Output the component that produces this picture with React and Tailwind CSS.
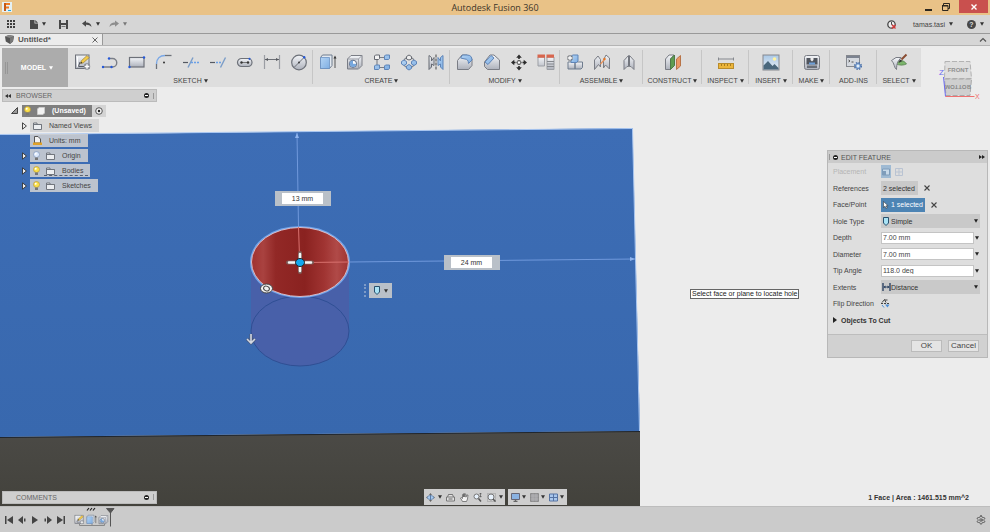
import React from "react";
import { LuSettings } from "react-icons/lu";

const Caret = ({ className = "text-[#333]" }) => (
  <svg viewBox="0 0 4 4" className={`h-1 w-1 shrink-0 ${className}`} aria-hidden="true">
    <path d="M0 .3h4L2 3.800z" fill="currentColor" />
  </svg>
);

// shared gradients for all the tool icons
const IconDefs = () => (
  <svg className="absolute h-0 w-0" aria-hidden="true">
    <defs>
      <linearGradient id="metal" x1="0" y1="0" x2="0" y2="1">
        <stop offset="0" stopColor="#f4f6f9" />
        <stop offset="1" stopColor="#adb1bb" />
      </linearGradient>
      <linearGradient id="sky" x1="0" y1="0" x2="1" y2="1">
        <stop offset="0" stopColor="#b4d4f4" />
        <stop offset="1" stopColor="#7faee2" />
      </linearGradient>
      <linearGradient id="picture" x1="0" y1="0" x2="0" y2="1">
        <stop offset="0" stopColor="#a9c8e6" />
        <stop offset="1" stopColor="#e8eef4" />
      </linearGradient>
    </defs>
  </svg>
);

const glyphs = {
  sketch: (
    <>
      <rect x="1.500" y="2" width="13.500" height="13.500" fill="url(#metal)" stroke="#6d7179" />
      <path d="M3.500 4v9.500h8" fill="none" stroke="#fff" />
      <path d="M4.500 13.500L6 9M4.500 13.500h6" stroke="#555962" />
      <path d="M6.500 10.500l.8-2.700L13 2.500l2.200 2.200-6 5.200z" fill="#f4cb4a" stroke="#8a7030" strokeWidth=".6" />
      <path d="M6.500 10.500l.6-1.800 1.200 1.200z" fill="#222" />
      <circle cx="13" cy="13.500" r="3.200" fill="#8a8d94" />
      <path d="M13 11.200v4.600M10.700 13.500h4.600" stroke="#fff" strokeWidth="1.400" />
    </>
  ),
  line: (
    <>
      <path d="M2 14h9.500a4.200 4.200 0 0 0 0-8.500H8" fill="none" stroke="#7b7f87" strokeWidth="1.400" />
      <circle cx="2" cy="14" r="1.200" fill="#2458d8" />
      <circle cx="10.500" cy="14" r="1.200" fill="#2458d8" />
      <circle cx="8" cy="5.500" r="1.200" fill="#2458d8" />
    </>
  ),
  rect: (
    <>
      <rect x="1.500" y="4.500" width="14.500" height="9.500" fill="url(#metal)" stroke="#6d7179" strokeWidth="1.200" />
      <circle cx="16" cy="4.500" r="1.200" fill="#2458d8" />
      <circle cx="1.500" cy="14" r="1.200" fill="#2458d8" />
    </>
  ),
  fillet: (
    <>
      <path d="M1.500 16V11" stroke="#6d7179" strokeWidth="1.300" />
      <path d="M1.500 11C1.500 5.500 5 2.500 10 2.500" fill="none" stroke="#7aa8e6" strokeWidth="1.500" />
      <path d="M10 2.500h6.500" stroke="#6d7179" strokeWidth="1.300" />
      <circle cx="9" cy="9.500" r="1" fill="#333" />
    </>
  ),
  trim: (
    <>
      <path d="M11 4.500L6 14.500" stroke="#7a9cc8" strokeWidth="1.400" />
      <path d="M1 9.500h5" stroke="#555962" strokeWidth="1.200" />
      <path d="M9 9.500h8" stroke="#6aa0e8" strokeWidth="1.300" strokeDasharray="2 1" />
    </>
  ),
  extend: (
    <>
      <path d="M1 9.500h5" stroke="#555962" strokeWidth="1.200" />
      <path d="M7 9.500h6" stroke="#6aa0e8" strokeWidth="1.300" strokeDasharray="2 1" />
      <path d="M16.500 4.500l-5 10" stroke="#7a9cc8" strokeWidth="1.400" />
    </>
  ),
  slot: (
    <>
      <rect x="1.500" y="5.500" width="14.500" height="8" rx="4" fill="url(#metal)" stroke="#6d7179" strokeWidth="1.200" />
      <path d="M6 9.500h6" stroke="#777" />
      <circle cx="5.500" cy="9.500" r="1.200" fill="#333" />
      <circle cx="12" cy="9.500" r="1.200" fill="#333" />
      <circle cx="13.500" cy="5.800" r="1.100" fill="#2458d8" />
    </>
  ),
  dimension: (
    <>
      <path d="M1.500 2v14M16.500 2v14" stroke="#9a9da3" strokeWidth="1.200" />
      <path d="M2 6.500h14" stroke="#6d7076" />
      <path d="M2 6.500L5 5v3zM16 6.500L13 5v3z" fill="#55585e" />
    </>
  ),
  circle: (
    <>
      <circle cx="9" cy="9.500" r="7.300" fill="url(#metal)" stroke="#6d7179" strokeWidth="1.200" />
      <path d="M4 14.500l10-10" stroke="#6d7179" />
      <circle cx="9" cy="9.500" r=".9" fill="#333" />
      <circle cx="14.200" cy="4.300" r="1.200" fill="#2458d8" />
    </>
  ),
  extrude: (
    <>
      <path d="M1.500 4.500l2-2.500h9.500v10.500l-2.500 3h-9z" fill="#e3e9f0" stroke="#6f7c8e" />
      <path d="M1.500 4.500h9v11h-9z" fill="url(#sky)" stroke="#6c93c4" strokeWidth=".8" />
      <path d="M16 15V5" stroke="#555" />
      <path d="M16 2.500l1.500 3h-3z" fill="#333" />
    </>
  ),
  hole: (
    <>
      <path d="M1.500 6l3.500-3.500h11v10L12.500 16h-11z" fill="url(#metal)" stroke="#7a7d85" />
      <path d="M1.500 6h11v10M12.500 6L16 2.500" fill="none" stroke="#9c9fa7" />
      <circle cx="7" cy="10.800" r="3.600" fill="#fff" stroke="#5a6780" />
      <path d="M7 7.500v3.300h3.300A3.300 3.300 0 1 1 7 7.500" fill="#77a7dd" />
    </>
  ),
  rectPattern: (
    <>
      <path d="M4 4.500h10M4 4.500v10h10" fill="none" stroke="#7b7f87" strokeWidth="1.100" />
      <path d="M1.500 3l1-1H6.500v3.500l-1 1h-4z" fill="#f3f3f3" stroke="#666a72" />
      <path d="M11.500 3l1-1h4v3.500l-1 1h-4zM1.500 13l1-1h4v3.500l-1 1h-4zM11.500 13l1-1h4v3.500l-1 1h-4z" fill="url(#sky)" stroke="#5f85b8" />
    </>
  ),
  circPattern: (
    <>
      <circle cx="9" cy="9.500" r="5.500" fill="none" stroke="#7b7f87" strokeWidth="1.100" />
      <path d="M6.500 3.500L9 2l2.500 1.500v2.500L9 7 6.500 6z" fill="#eee" stroke="#666a72" />
      <path d="M1.500 8.500L4 7l2.500 1.500V11L4 12.500 1.500 11zM11.500 8.500L14 7l2.500 1.500V11L14 12.500 11.500 11zM6.500 13L9 11.500l2.500 1.500v2.500L9 17l-2.500-1.500z" fill="url(#sky)" stroke="#5f85b8" />
    </>
  ),
  mirror: (
    <>
      <path d="M2 2.500l2.500 2V8L7 4.500v8L4.500 11v3L2 16.500z" fill="url(#metal)" stroke="#666a72" />
      <path d="M16 2.500l-2.500 2V8L11 4.500v8l2.500-1.500v3l2.500 2.500z" fill="url(#sky)" stroke="#5f85b8" />
      <path d="M9 1.500v15.500" stroke="#444" strokeDasharray="3 1" />
    </>
  ),
  roundEdge: (
    <>
      <path d="M1.500 7.500L6 2h5l5 4v6.500l-3.500 4h-11z" fill="url(#metal)" stroke="#7a7d85" />
      <path d="M6.500 2H11c3.500 0 5 2 5 5l-3.500 3.500C12.500 7.500 11 6 9 6L4.500 5z" fill="url(#sky)" stroke="#5f85b8" />
    </>
  ),
  chamferEdge: (
    <>
      <path d="M1.500 9L7 2h4l5.500 5v9.500h-12l-3-3z" fill="url(#metal)" stroke="#7a7d85" />
      <path d="M2 9L8 2.500l3 2.500-6 6.500z" fill="url(#sky)" stroke="#5f85b8" />
    </>
  ),
  move: (
    <>
      <path d="M9 1.500l2.800 3.300H6.200zM9 17.500l2.800-3.300H6.200zM1 9.500l3.300-2.800v5.600zM17 9.500l-3.300-2.800v5.600z" fill="#2b2b2b" />
      <path d="M9 4v11M3.500 9.500h11" stroke="#2b2b2b" strokeWidth="1.600" strokeDasharray="2 1" />
      <rect x="7.500" y="8" width="3" height="3" fill="#fff" stroke="#777" />
    </>
  ),
  params: (
    <>
      <path d="M1 4h6.500v9H1zM10 4h7v12.500h-7z" fill="url(#metal)" stroke="#9c9fa5" />
      <path d="M.5 1.500h7.500v3.200H.5zM9.500 1.500h7.500v3.200H9.500z" fill="#d8664e" />
      <path d="M10 8.500h7M10 11h7M10 13.500h7" stroke="#85888e" />
    </>
  ),
  component: (
    <>
      <path d="M2 9h7v7H2zM9 10.500l1.500-1.500h6v5.500L15 16H9z" fill="url(#metal)" stroke="#6f7c8e" />
      <path d="M5 4l1.500-2H12v6l-1.500 1.500H5z" fill="url(#sky)" stroke="#5f85b8" />
      <path d="M4 2v6M1 5h6" stroke="#6d7076" strokeWidth="2.800" />
      <path d="M4 2.500v5M1.500 5h5" stroke="#fff" strokeWidth="1.300" />
    </>
  ),
  joint: (
    <>
      <path d="M1.500 7L5 3l2.500 3.500V14l-2-2.500-4 5zM16.500 5L13 2l-2.500 5v8l2-3 4 4z" fill="url(#metal)" stroke="#7a7d85" />
      <path d="M7.500 11l4-4.500" stroke="#e8915a" strokeWidth="1.200" />
      <circle cx="11.500" cy="6" r="1.200" fill="#e87722" />
    </>
  ),
  builtJoint: (
    <>
      <path d="M8.500 2.500L4 7.500v9l3-3h1.500zM9.500 2.500l4.500 5v9l-3-3H9.500z" fill="url(#metal)" stroke="#7a7d85" />
      <path d="M9 3v10.500" stroke="#6d7076" />
    </>
  ),
  plane: (
    <>
      <path d="M1.500 6L5 2h5L6.500 6v10.500h-5z" fill="url(#metal)" stroke="#7a7d85" />
      <path d="M6.500 6L10.500 2v10.500l-4 4z" fill="#5e9c50" stroke="#4d7a48" />
      <path d="M12.500 6L16.500 2.500v10.500l-4 3.500z" fill="#ea9766" stroke="#b87448" />
    </>
  ),
  measure: (
    <>
      <path d="M1.500 6h15M1.500 4.500v3M16.500 4.500v3" stroke="#85888e" />
      <rect x="1.500" y="10.500" width="15" height="5" fill="#ecb53a" stroke="#b88c2c" />
      <path d="M4.500 11v2M7.500 11v2M10.500 11v2M13.500 11v2" stroke="#8a6414" strokeWidth=".7" />
    </>
  ),
  image: (
    <>
      <rect x="1" y="2" width="16" height="15" fill="url(#picture)" stroke="#85888e" />
      <circle cx="12.500" cy="6" r="1.800" fill="#fff3a0" />
      <path d="M1.500 16.500v-4L6 8l4.500 5 2-2 4 4v1.500z" fill="#4a677c" />
    </>
  ),
  printer: (
    <>
      <rect x="1.500" y="2.500" width="15" height="14" rx="2" fill="url(#metal)" stroke="#7a7d85" />
      <path d="M3.500 5h11v6.500h-11z" fill="#50555e" />
      <path d="M7.500 5h3v2L9 8.500 7.500 7z" fill="#ececec" />
      <path d="M4 12.500h10V15H4z" fill="#6a6f78" />
      <path d="M6 9.500h6v2H6z" fill="#6d9fd8" />
    </>
  ),
  addins: (
    <>
      <rect x="1.500" y="2.500" width="13" height="11" fill="#d5d9df" stroke="#85888e" />
      <path d="M1.500 3h13v2h-13z" fill="#7c8390" />
      <path d="M3.500 7l1.500 1-1.500 1M6.500 9h2" fill="none" stroke="#555" />
      <circle cx="13" cy="13" r="3.300" fill="none" stroke="#4a70a8" strokeWidth="1.500" strokeDasharray="1.500 1.100" />
      <circle cx="13" cy="13" r="2.500" fill="#a9c8ea" stroke="#5a80b8" />
      <circle cx="13" cy="13" r=".9" fill="#fff" />
    </>
  ),
  select: (
    <>
      <path d="M6 11c3-5 8-4 10.500 0-3 1.500-7 1.500-10.500 0" fill="#7cb46c" stroke="#4f7c47" strokeWidth=".7" />
      <path d="M1.500 7.500L6 4.500h5L8 8.500c-1 2-1.500 5-1.500 8C4 15 4.500 10 1.500 7.500z" fill="url(#metal)" stroke="#7a7d85" />
      <path d="M11.500 6.500l5-5" stroke="#8a4c32" strokeWidth="2" />
      <path d="M8.500 10l1.500-3.500 2.500 1.500z" fill="#333" />
    </>
  ),
};

const ToolIcon = ({ name, size = "h-[18px] w-[18px]" }) => (
  <svg viewBox="0 0 18 18" className={size} aria-hidden="true">
    {glyphs[name]}
  </svg>
);

const groups = [
  { label: "SKETCH", tools: ["sketch", "line", "rect", "fillet", "trim", "extend", "slot", "dimension", "circle"], width: "w-[245px]" },
  { label: "CREATE", tools: ["extrude", "hole", "rectPattern", "circPattern", "mirror"], width: "w-[137px]" },
  { label: "MODIFY", tools: ["roundEdge", "chamferEdge", "move", "params"], width: "w-[110px]" },
  { label: "ASSEMBLE", tools: ["component", "joint", "builtJoint"], width: "w-[83px]" },
  { label: "CONSTRUCT", tools: ["plane"], width: "w-[59px]" },
  { label: "INSPECT", tools: ["measure"], width: "w-[47px]" },
  { label: "INSERT", tools: ["image"], width: "w-[44px]" },
  { label: "MAKE", tools: ["printer"], width: "w-[37px]" },
  { label: "ADD-INS", tools: ["addins"], width: "w-[47px]", plain: true },
  { label: "SELECT", tools: ["select"], width: "w-[44px]", last: true },
];

const TitleBar = () => (
  <div className="flex h-[15px] shrink-0 items-start bg-[#e9c287]">
    <div className="flex flex-1 pl-[2px] pt-[2px]">
      <svg viewBox="0 0 10 10" className="h-[10px] w-[10px]" aria-hidden="true">
        <path d="M0 0h10v10H0z" fill="#e4f1f5" />
        <path d="M2 1h6v2H4v1.500h3v2H4V9H2z" fill="#ee7b22" />
        <path d="M2 1h2v8H2z" fill="#c65a14" />
        <path d="M6 8h3v1H6z" fill="#25a7dd" />
      </svg>
    </div>
    <h1 className="font-['Open_Sans',sans-serif] text-[9px] leading-[15px] text-[#3c352a]">Autodesk Fusion 360</h1>
    <div className="flex flex-1 justify-end gap-[9px] pr-[2px]">
      <button aria-label="Minimize" className="flex h-[13px] items-center">
        <svg viewBox="0 0 8 8" className="h-2 w-2"><path d="M0 6h7v2H0z" fill="#2d281f" /></svg>
      </button>
      <button aria-label="Restore" className="flex h-[13px] items-center">
        <svg viewBox="0 0 8 8" className="h-2 w-2">
          <path d="M1.500 2V.5h6v5H6M.5 2.500h5.500v5H.5z" fill="none" stroke="#2d281f" />
          <path d="M0 2h6v1.500H0z" fill="#2d281f" />
        </svg>
      </button>
      <button aria-label="Close" className="flex h-[13px] w-[29px] items-center justify-center bg-[#c9504e]">
        <svg viewBox="0 0 6 6" className="h-[6px] w-[6px]"><path d="M.5.5l5 5M5.500.5l-5 5" stroke="#fff" strokeWidth="1.400" /></svg>
      </button>
    </div>
  </div>
);

const MenuBar = () => (
  <div className="flex h-[19px] shrink-0 items-center justify-between border-b border-[#999] bg-[#d6d6d6] px-[6px]">
    <div className="flex items-center text-[#444]">
      <button aria-label="Data panel" className="mr-[14px]">
        <svg viewBox="0 0 10 10" className="h-[10px] w-[10px]">
          <path d="M1 1h2v2H1zM4 1h2v2H4zM7 1h2v2H7zM1 4h2v2H1zM4 4h2v2H4zM7 4h2v2H7zM1 7h2v2H1zM4 7h2v2H4zM7 7h2v2H7z" fill="#3d3d3d" />
        </svg>
      </button>
      <button aria-label="File" className="mr-[13px] flex items-center gap-1">
        <svg viewBox="0 0 8 9" className="h-[9px] w-2"><path d="M0 0h4.500v3.500H8V9H0zM5.300 0L8 2.700H5.300z" fill="#484848" /></svg>
        <Caret />
      </button>
      <button aria-label="Save" className="mr-[14px]">
        <svg viewBox="0 0 9 9" className="h-[9px] w-[9px]">
          <path d="M0 0h9v9H0z" fill="#484848" />
          <path d="M2 0h5v3H2zM2 5h5v4H2z" fill="#d6d6d6" />
          <path d="M2.500 6h4v1h-4z" fill="#777" />
        </svg>
      </button>
      <button aria-label="Undo" className="mr-[9px] flex items-center gap-1">
        <svg viewBox="0 0 10 8" className="h-2 w-[10px]"><path d="M0 3.500L4 .5v2c3 0 5 1 5.500 4.500C8 5.200 6.500 4.600 4 4.700v2z" fill="#484848" /></svg>
        <Caret />
      </button>
      <button aria-label="Redo" className="flex items-center gap-1">
        <svg viewBox="0 0 10 8" className="h-2 w-[10px]"><path d="M10 3.500L6 .5v2C3 2.500 1 3.500.5 7 2 5.200 3.500 4.600 6 4.700v2z" fill="#8d8d8d" /></svg>
        <Caret className="text-[#777]" />
      </button>
    </div>
    <div className="flex items-center text-[7px] text-[#444]">
      <button aria-label="Job status" className="mr-[17px]">
        <svg viewBox="0 0 9 9" className="h-[9px] w-[9px]">
          <circle cx="4.500" cy="4.500" r="3.700" fill="#eee" stroke="#484848" strokeWidth="1.300" />
          <path d="M4.500 2v2.500l2 1" fill="none" stroke="#484848" />
          <path d="M5 5l3.500 3.500M8.500 5L5 8.500" stroke="#d83a3a" strokeWidth="1.300" />
        </svg>
      </button>
      <button className="mr-[14px] flex items-center gap-1">tamas.tasi<Caret /></button>
      <button aria-label="Help" className="flex items-center gap-[4px]">
        <span className="flex h-[9px] w-[9px] items-center justify-center rounded-full bg-[#484848] text-[7px] leading-none font-bold text-[#ddd]">?</span>
        <Caret />
      </button>
    </div>
  </div>
);

const TabBar = () => (
  <div className="flex h-[12px] shrink-0 items-center justify-between border-b border-[#b4b4b4] bg-[#d6d6d6] pr-[3px]">
    <div className="flex h-full w-[103px] items-center border-r border-[#999] bg-[#ececec] pr-[4px] pl-[5px]">
      <svg viewBox="0 0 9 9" className="h-[9px] w-[9px]" aria-hidden="true">
        <path d="M0 1.500L4 0l5 1-1 5.500L5 9 .8 6.500z" fill="#555" />
        <path d="M0 1.500L4 0l5 1-4 2z" fill="#888" />
        <path d="M5 3l4-2-1 5.500L5 9z" fill="#777" />
      </svg>
      <span className="ml-[4px] flex-1 text-[8px] font-bold text-[#555]">Untitled*</span>
      <button aria-label="Close tab">
        <svg viewBox="0 0 6 6" className="h-[6px] w-[6px]"><path d="M.5.5l5 5M5.500.5l-5 5" stroke="#666" /></svg>
      </button>
    </div>
    <button aria-label="Collapse toolbar">
      <svg viewBox="0 0 8 6" className="h-[6px] w-2"><path d="M1 4.500l3-3 3 3" fill="none" stroke="#555" strokeWidth="1.200" /></svg>
    </button>
  </div>
);

const Toolbar = () => (
  <div className="relative mt-[2px] ml-[2px] flex h-[39px] w-fit bg-[#dedede]">
    <button className="relative flex w-[66px] items-center justify-center gap-[3px] bg-[#acacac] pl-[4px] text-[7px] font-bold text-white">
      <span className="absolute top-[14px] left-[3px] h-3 w-[3px] border-x border-[#969696]" />
      MODEL <Caret className="text-white" />
    </button>
    {groups.map((g) => (
      <div key={g.label} className={`${g.width} relative flex flex-col items-center`}>
        <div className="mt-[5px] flex">
          {g.tools.map((t) => (
            <button key={t} aria-label={t} className="flex w-[27px] justify-center">
              <ToolIcon name={t} />
            </button>
          ))}
        </div>
        <button className="mt-[5px] flex items-center gap-[2px] text-[7px] leading-[10px] text-[#444]">
          {g.label}
          {!g.plain && <Caret />}
        </button>
        {!g.last && <span className="absolute top-[2px] right-0 h-[34px] w-px bg-[#c6c6c6]" />}
      </div>
    ))}
  </div>
);

const ViewCube = () => (
  <svg viewBox="0 0 44 44" className="absolute top-[12px] right-[8px] h-11 w-11" aria-label="View cube">
    <path d="M7 3.500h25l1.500 17L32 37H9L6.500 20.500z" fill="#d7d7d7" />
    <path d="M7 3.500h25l1.500 17h-27z" fill="#dedede" stroke="#b3b3b3" strokeDasharray="5 2" />
    <path d="M6.500 21h27L32 37.500H8z" fill="#cfcfcf" stroke="#aaa" strokeDasharray="5 2" />
    <text x="20" y="14" textAnchor="middle" fontSize="6" fontWeight="bold" fill="#909090">FRONT</text>
    <text x="20" y="-27" textAnchor="middle" fontSize="6" fontWeight="bold" fill="#8a8a8a" transform="rotate(180 20 0)">BOTTOM</text>
    <path d="M7.500 38.500L5.500 19" stroke="#6a6af0" />
    <path d="M7.500 38.500h29" stroke="#f07070" />
    <text x="1" y="17" fontSize="8" fill="#6a6af0">Z</text>
    <text x="37" y="41" fontSize="7" fill="#f07070">X</text>
  </svg>
);

const Scene = () => (
  <svg viewBox="0 0 990 460" preserveAspectRatio="xMinYMin slice" className="absolute inset-0 h-full w-full" aria-label="Model view">
    <defs>
      <linearGradient id="bore" x1="0" x2="1" y1="0" y2="0">
        <stop offset="0" stopColor="#a03230" />
        <stop offset=".12" stopColor="#a94240" />
        <stop offset=".25" stopColor="#922826" />
        <stop offset=".55" stopColor="#8a2220" />
        <stop offset=".75" stopColor="#a03432" />
        <stop offset=".88" stopColor="#b04a48" />
        <stop offset="1" stopColor="#a03432" />
      </linearGradient>
      <linearGradient id="side" x1="0" x2="0" y1="0" y2="1">
        <stop offset="0" stopColor="#4b4a46" />
        <stop offset="1" stopColor="#43423c" />
      </linearGradient>
      <linearGradient id="face" x1="0" x2="0" y1="0" y2="1">
        <stop offset="0" stopColor="#3d6db5" />
        <stop offset="1" stopColor="#3868ae" />
      </linearGradient>
    </defs>
    <path d="M0 391l640-6v75H0z" fill="url(#side)" />
    <path d="M0 89l632.500-7L640 385 0 391z" fill="url(#face)" />
    <path d="M0 88.500l632.500-6L639.500 385" fill="none" stroke="#a9c6f0" strokeWidth="1" />
    <path d="M0 391.500l640-6" stroke="#20262e" />
    <path d="M251 216v69a49 35 0 0 0 98 0v-69z" fill="#4860a9" />
    <ellipse cx="300" cy="285" rx="49" ry="35" fill="#4860a9" stroke="#2f4f94" />
    <ellipse cx="300" cy="216" rx="49" ry="35" fill="none" stroke="#6fa5ec" strokeWidth="2" />
    <ellipse cx="300" cy="216" rx="48.500" ry="34.500" fill="url(#bore)" stroke="#e3c3cc" strokeWidth=".9" />
    <path d="M297 87l1.500 94M349 216l286-3" stroke="#7099dc" fill="none" />
    <path d="M298.500 181l1 30M305 216.500l44-.5" stroke="#d9716e" fill="none" />
    <path d="M297 87l-2 5h4zM635 213l-5-2v4z" fill="#8fb4ee" />
    <path d="M300 207v19M288 216.500h24" stroke="#7c5c58" strokeWidth="4" strokeLinecap="round" />
    <path d="M300 208v17M289 216.500h22" stroke="#f5f5f5" strokeWidth="2.500" strokeLinecap="round" />
    <ellipse cx="300" cy="216.500" rx="4.500" ry="4" fill="#12a7ef" stroke="#222" />
    <ellipse cx="266.500" cy="242.500" rx="6" ry="4.500" fill="#f0f0f0" stroke="#444" />
    <ellipse cx="266.500" cy="242.500" rx="3" ry="2.300" fill="none" stroke="#444" transform="rotate(25 266.500 242.500)" />
    <path d="M251 288v8M247 293l4 4 4-4" fill="none" stroke="#4a5878" strokeWidth="3" />
    <path d="M251 288v8M247 293l4 4 4-4" fill="none" stroke="#d3d8e2" strokeWidth="1.600" />
  </svg>
);

const DimensionBox = ({ label, value, place }) => (
  <label className={`absolute ${place} flex h-[15px] w-14 bg-[#b9c0c8] py-[2px] pr-[8px] pl-[7px]`}>
    <input aria-label={label} defaultValue={value} className="w-full bg-white text-center text-[7px] leading-none text-[#333] outline-none" />
  </label>
);

const BoltGlyph = () => (
  <svg viewBox="0 0 6 9" className="h-[9px] w-[6px] shrink-0" aria-hidden="true">
    <path d="M.5.5h5V6L3 8.500.5 6z" fill="#a9e3f5" stroke="#27506e" />
  </svg>
);

const Bulb = ({ off }) => (
  <svg viewBox="0 0 7 10" className="h-[10px] w-[7px]" aria-hidden="true">
    <circle cx="3.500" cy="3.500" r="3" fill={off ? "#dbe8fb" : "#fbe04a"} stroke={off ? "#8095b8" : "#b8983c"} strokeWidth=".7" />
    <path d="M2 6.500h3V9H2z" fill="#777" />
    <circle cx="2.700" cy="2.700" r="1" fill="#fff" />
  </svg>
);

const Folder = () => (
  <svg viewBox="0 0 9 8" className="h-2 w-[9px]" aria-hidden="true">
    <path d="M.5 1h3.500v1.500h4.500v5h-8z" fill="#eceef1" stroke="#70757d" />
    <path d="M.5 2.500h8" stroke="#70757d" />
  </svg>
);

const PanelHeader = ({ title }) => (
  <div className="flex h-[13px] w-[155px] items-center border border-[#bbb] bg-[#cfcfcf] pr-[2px] pl-[2px]">
    {title === "BROWSER" && (
      <svg viewBox="0 0 6 4" className="h-1 w-[6px]" aria-hidden="true"><path d="M3 0v4L0 2zM6 0v4L3 2z" fill="#333" /></svg>
    )}
    <h2 className={`flex-1 text-[7px] text-[#666] ${title === "BROWSER" ? "ml-[5px]" : "ml-[11px]"}`}>{title}</h2>
    <button aria-label={`${title} options`} className="flex h-[5px] w-[5px] items-center justify-center rounded-full bg-[#222]">
      <span className="h-px w-[3px] bg-white" />
    </button>
    <span className="ml-[3px] h-[6px] w-[2px] border-r border-[#999]" />
  </div>
);

const treeRows = [
  { name: "Named Views", arrow: true, icon: "folder" },
  { name: "Units: mm", icon: "units" },
  { name: "Origin", arrow: true, icon: "folder", bulb: "off" },
  { name: "Bodies", arrow: true, icon: "folder", bulb: "on", dashed: true },
  { name: "Sketches", arrow: true, icon: "folder", bulb: "on" },
];

const Browser = () => (
  <section className="mt-[2px] ml-[2px]">
    <PanelHeader title="BROWSER" />
    <ul className="mt-[2px] flex flex-col gap-[2px] text-[7px] text-[#444]">
      <li className="ml-[9px] flex h-[13px] items-center">
        <svg viewBox="0 0 7 7" className="mr-[4px] h-[7px] w-[7px]" aria-hidden="true"><path d="M6.500.5v6h-6z" fill="#999" stroke="#444" /></svg>
        <span className="flex h-[12px] w-[70px] items-center bg-[#7f7f7f] pl-[2px] font-bold text-white">
          <Bulb />
          <svg viewBox="0 0 8 8" className="ml-[6px] h-2 w-2" aria-hidden="true"><path d="M.5 2l1.500-1.500h5.500V6L6 7.500H.5z" fill="#f2f2f2" stroke="#c9c9c9" /></svg>
          <span className="ml-[7px]">(Unsaved)</span>
        </span>
        <span className="flex h-[12px] w-[14px] items-center justify-center bg-[#d4d4d4]">
          <svg viewBox="0 0 8 8" className="h-2 w-2" aria-hidden="true"><circle cx="4" cy="4" r="3.300" fill="#f4f4f4" stroke="#555" /><circle cx="4" cy="4" r="1.200" fill="#222" /></svg>
        </span>
      </li>
      {treeRows.map((r) => (
        <li key={r.name} className="ml-[20px] flex h-[13px] items-center">
          <span className="flex w-[8px]">
            {r.arrow && (
              <svg viewBox="0 0 5 8" className="h-2 w-[5px]" aria-hidden="true"><path d="M.5.8v6.400L4.400 4z" fill="#eee" stroke="#333" strokeWidth=".9" /></svg>
            )}
          </span>
          <span className="relative flex h-[13px] items-center bg-[#d2d2d2]/85 pr-[7px] pl-[3px]">
            {r.bulb && <span className="mr-[6px]"><Bulb off={r.bulb === "off"} /></span>}
            {r.icon === "folder" ? (
              <Folder />
            ) : (
              <svg viewBox="0 0 9 9" className="h-[9px] w-[9px]" aria-hidden="true">
                <path d="M1.500.5H5L7.500 3v4h-6z" fill="#f2f2f2" stroke="#555" />
                <path d="M0 6.500h9V9H0z" fill="#e0a126" />
              </svg>
            )}
            <span className="ml-[7px]">{r.name}</span>
            {r.dashed && <span className="absolute right-[2px] bottom-[1px] left-[14px] border-b border-dashed border-[#5a6270]" />}
          </span>
        </li>
      ))}
    </ul>
  </section>
);

const Field = ({ label, id, children, muted }) => (
  <div className="flex h-[15px] items-center">
    <label htmlFor={id} className={`w-12 shrink-0 text-[7px] ${muted ? "text-[#b5b5b5]" : "text-[#444]"}`}>{label}</label>
    {children}
  </div>
);

const ValueField = ({ label, id, value }) => (
  <Field label={label} id={id}>
    <input id={id} defaultValue={value} className="h-3 min-w-0 flex-1 border border-[#c4c4c4] bg-white px-[1px] text-[7px] text-[#444] outline-none" />
    <span className="ml-[1px] flex w-[5px]"><Caret className="text-[#222]" /></span>
  </Field>
);

const ChoiceField = ({ label, id, value, icon }) => (
  <Field label={label} id={id}>
    <div className="flex h-[14px] flex-1 items-center bg-[#c9c9c9] pr-[2px]">
      <span className="flex w-[10px] justify-center">{icon}</span>
      <select id={id} className="min-w-0 flex-1 appearance-none bg-transparent text-[7px] text-[#333] outline-none">
        <option>{value}</option>
      </select>
      <Caret className="text-[#222]" />
    </div>
  </Field>
);

const ClearButton = () => (
  <button type="button" aria-label="Clear selection" className="ml-[6px]">
    <svg viewBox="0 0 6 6" className="h-[6px] w-[6px]"><path d="M.5.5l5 5M5.500.5l-5 5" stroke="#444" strokeWidth="1.100" /></svg>
  </button>
);

const EditFeature = () => (
  <section className="mt-[63px] mr-[2px] h-fit w-[161px] border border-[#b8b8b8] bg-[#dedede]">
    <div className="flex h-3 items-center bg-[#cbcbcb] pr-[2px] pl-[1px]">
      <span className="mr-[3px] h-[6px] w-px bg-[#999]" />
      <span className="flex h-[5px] w-[5px] items-center justify-center rounded-full bg-[#222]"><span className="h-px w-[3px] bg-white" /></span>
      <h2 className="ml-[3px] flex-1 text-[7px] text-[#555]">EDIT FEATURE</h2>
      <svg viewBox="0 0 6 4" className="h-1 w-[6px]" aria-hidden="true"><path d="M0 0v4l3-2zM3 0v4l3-2z" fill="#222" /></svg>
    </div>
    <form className="flex h-[165px] flex-col justify-between pt-[1px] pr-[7px] pl-[5px]">
      <Field label="Placement" id="placement" muted>
        <button id="placement" type="button" aria-label="At point" className="flex h-[13px] w-[10px] items-center justify-center bg-[#9fbad3]">
          <svg viewBox="0 0 8 8" className="h-2 w-2"><path d="M.5 1h7v6h-7z" fill="#c6d8e8" stroke="#7e9cba" /><path d="M1 3h3v4H1z" fill="#7e9cba" /></svg>
        </button>
        <button type="button" aria-label="From sketch" className="ml-[4px]">
          <svg viewBox="0 0 8 8" className="h-2 w-2"><path d="M.5.5h7v7h-7zM0 4h8M4 0v8" fill="none" stroke="#b9c3d2" /></svg>
        </button>
      </Field>
      <Field label="References" id="references">
        <button id="references" type="button" className="h-[14px] w-[37px] bg-[#c9c9c9] pl-[2px] text-left text-[7px] text-[#333]">2 selected</button>
        <ClearButton />
      </Field>
      <Field label="Face/Point" id="face-point">
        <button id="face-point" type="button" className="flex h-[14px] w-11 items-center gap-[2px] bg-[#4d84b4] pl-[2px] text-[7px] whitespace-nowrap text-white">
          <svg viewBox="0 0 6 8" className="h-2 w-[6px]"><path d="M.5.5v6L2 5.200l1.200 2.300 1-.5L3.100 4.800h2z" fill="#fff" stroke="#222" strokeWidth=".5" /></svg>
          1 selected
        </button>
        <ClearButton />
      </Field>
      <ChoiceField label="Hole Type" id="hole-type" value="Simple" icon={<BoltGlyph />} />
      <ValueField label="Depth" id="depth" value="7.00 mm" />
      <ValueField label="Diameter" id="diameter" value="7.00 mm" />
      <ValueField label="Tip Angle" id="tip-angle" value="118.0 deg" />
      <ChoiceField
        label="Extents"
        id="extents"
        value="Distance"
        icon={
          <svg viewBox="0 0 9 8" className="h-2 w-[9px]" aria-hidden="true">
            <path d="M1 0v8M8 0v8" stroke="#223a5c" strokeWidth="1.300" />
            <path d="M2 4h5" stroke="#223a5c" strokeWidth=".8" />
            <path d="M1.500 4l2-1.500v3zM7.500 4l-2-1.500v3z" fill="#223a5c" />
          </svg>
        }
      />
      <Field label="Flip Direction" id="flip">
        <button id="flip" type="button" aria-label="Flip direction">
          <svg viewBox="0 0 9 9" className="h-[9px] w-[9px]">
            <path d="M0 4.500h8" stroke="#444" strokeDasharray="2 1" />
            <path d="M1 3.500L3.500.5 5 3.500M3.500 1h3" fill="none" stroke="#444" />
            <path d="M4 5.500h4.500L6.500 8.500z" fill="#4d8fd8" />
            <path d="M1 6l2 2.500" stroke="#4d8fd8" />
          </svg>
        </button>
      </Field>
      <button type="button" className="flex h-[15px] items-center gap-[4px] text-[7px] font-bold text-[#333]">
        <svg viewBox="0 0 4 6" className="h-[6px] w-1" aria-hidden="true"><path d="M0 0v6l4-3z" fill="#222" /></svg>
        Objects To Cut
      </button>
    </form>
    <div className="mt-[6px] flex h-[23px] items-center justify-end gap-[6px] border-t border-[#bdbdbd] bg-[#d1d1d1] pr-[8px]">
      <button className="h-3 w-[31px] border border-[#bbb] bg-[#e4e4e4] text-[8px] leading-none text-[#444]">OK</button>
      <button className="h-3 w-[31px] border border-[#bbb] bg-[#e4e4e4] text-[8px] leading-none text-[#444]">Cancel</button>
    </div>
  </section>
);

const NavBar = () => (
  <div className="flex gap-[3px]">
    <div className="flex h-[16px] w-[81px] items-center justify-between bg-[#cecece] px-[2px]">
      <button aria-label="Orbit" className="flex items-center gap-[3px]">
        <svg viewBox="0 0 9 9" className="h-[9px] w-[9px]">
          <path d="M4.500 0l1.500 2H3zM4.500 9L3 7h3zM0 4.500L2 3v3zM9 4.500L7 3v3z" fill="#666" />
          <ellipse cx="4.500" cy="4.500" rx="3.200" ry="2" fill="#a9ccf2" stroke="#6a86ac" strokeWidth=".8" />
          <path d="M4.500 2v5" stroke="#5a7ca8" />
        </svg>
        <Caret />
      </button>
      <button aria-label="Look at">
        <svg viewBox="0 0 9 9" className="h-[9px] w-[9px]"><path d="M.5 4h8v4h-8zM1.500 4l1-2.500h4L7.500 4M2.500 1.500h4" fill="#e2e2e2" stroke="#777" /><path d="M2.500 6h4" stroke="#666" /></svg>
      </button>
      <button aria-label="Pan">
        <svg viewBox="0 0 9 9" className="h-[9px] w-[9px]"><path d="M2.500 8.500L.5 5l1-.5 1 1v-4h1V4 .7h1.200V4 1h1.200v3.200L7 2h1L7.500 6 6.500 8.500z" fill="#f3f3f3" stroke="#666" strokeWidth=".8" /></svg>
      </button>
      <button aria-label="Zoom">
        <svg viewBox="0 0 9 9" className="h-[9px] w-[9px]"><circle cx="3.500" cy="3.500" r="2.500" fill="#e8f2fc" stroke="#777" /><path d="M5.500 5.500L8 8.500" stroke="#555" strokeWidth="1.500" /><path d="M7.500 0v4M6.500 1.200L7.500 0l1 1.200M6.500 3l1 1.200 1-1.200" fill="none" stroke="#555" strokeWidth=".7" /></svg>
      </button>
      <button aria-label="Fit" className="flex items-center gap-[3px]">
        <svg viewBox="0 0 9 9" className="h-[9px] w-[9px]"><path d="M.5.5h8v8h-8z" fill="none" stroke="#999" strokeDasharray="1 1" /><circle cx="4" cy="4" r="3" fill="#e8f2fc" stroke="#777" /><path d="M6 6l2.500 2.500" stroke="#555" strokeWidth="1.500" /></svg>
        <Caret />
      </button>
    </div>
    <div className="flex h-[16px] w-[59px] items-center justify-between bg-[#cecece] px-[3px]">
      <button aria-label="Display settings" className="flex items-center gap-[2px]">
        <svg viewBox="0 0 9 9" className="h-[9px] w-[9px]"><path d="M.5.5h8v6h-8z" fill="#8ab2e2" stroke="#667" /><path d="M2.500 8.500h4M4.500 6.500v2" stroke="#666" strokeWidth="1.300" /></svg>
        <Caret />
      </button>
      <button aria-label="Grid and snaps" className="flex items-center gap-[2px]">
        <svg viewBox="0 0 9 9" className="h-[9px] w-[9px]"><path d="M.5.5h8v8h-8z" fill="#a0a0a4" stroke="#8c8c8c" /><path d="M3 .5v8M6 .5v8M.5 3h8M.5 6h8" stroke="#b8b8ba" strokeWidth=".6" /></svg>
        <Caret />
      </button>
      <button aria-label="Viewports" className="flex items-center gap-[2px]">
        <svg viewBox="0 0 9 9" className="h-[9px] w-[9px]"><path d="M.5 1h8v7h-8zM4.500 1v7M.5 4.500h8" fill="#a9c7ec" stroke="#5674a4" /></svg>
        <Caret />
      </button>
    </div>
  </div>
);

const playback = [
  ["Go to start", "M0 0h1.500v8H0zM8 0v8L2 4z"],
  ["Step back", "M5 0v8L0 4zM6 2.500h1.500v3H6z"],
  ["Play", "M1 0l6 4-6 4z"],
  ["Step forward", "M3 0v8l5-4zM.5 2.500H2v3H.5z"],
  ["Go to end", "M6.500 0H8v8H6.500zM0 0v8l6-4z"],
];

const Timeline = () => (
  <footer className="flex h-[26px] shrink-0 items-center justify-between border-t border-[#bdbdbd] bg-[#cbcbcb] pr-[4px] pl-[5px]">
    <div className="flex items-center">
      <div className="flex gap-[5px]">
        {playback.map(([label, d]) => (
          <button key={label} aria-label={label}>
            <svg viewBox="0 0 8 8" className="h-2 w-2"><path d={d} fill="#444" /></svg>
          </button>
        ))}
      </div>
      <div className="relative ml-[9px] flex gap-[1px]">
        {["sketch", "extrude", "hole"].map((t) => (
          <button key={t} aria-label={`${t} feature`}>
            <ToolIcon name={t} size="h-[11px] w-[11px]" />
          </button>
        ))}
        <svg viewBox="0 0 42 20" className="absolute -top-[7px] left-0 h-5 w-[42px]" aria-hidden="true">
          <path d="M13 3.500l2-2.500M16 3.500L18 1M19 3.500L21 1" stroke="#222" strokeWidth="1.200" />
          <path d="M5.500 17v1.500h25V17M18 17v1.500" fill="none" stroke="#888" />
          <path d="M36.500 4v15.500" stroke="#555" />
          <path d="M32.500 1.500h7.500L36.500 6z" fill="#555" stroke="#555" />
        </svg>
      </div>
    </div>
    <button aria-label="Timeline settings"><LuSettings className="h-[10px] w-[10px] text-[#444]" /></button>
  </footer>
);

export default function App() {
  return (
    <div className="flex h-screen flex-col overflow-hidden bg-[#ececec] font-['Liberation_Sans',Arial,sans-serif] leading-none">
      <IconDefs />
      <TitleBar />
      <MenuBar />
      <TabBar />
      <main className="relative flex min-h-0 flex-1 flex-col">
        <Scene />
        <ViewCube />
        <DimensionBox label="Vertical distance" value="13 mm" place="top-[145px] left-[275px]" />
        <DimensionBox label="Horizontal distance" value="24 mm" place="top-[209px] left-[444px]" />
        <div className="absolute top-[237px] left-[364px] flex items-center gap-[3px]">
          <span className="h-[13px] border-l-2 border-dotted border-[#7d9bc8]" />
          <button aria-label="Hole type" className="flex h-[15px] w-[23px] items-center justify-center gap-[4px] bg-[#b9c0c8]">
            <BoltGlyph />
            <Caret />
          </button>
        </div>
        <div role="tooltip" className="absolute top-[243px] left-[690px] border border-[#666] bg-white px-[1px] text-[7px] leading-[8px] whitespace-nowrap text-[#222]">
          Select face or plane to locate hole
        </div>
        <Toolbar />
        <div className="relative flex flex-1 justify-between">
          <Browser />
          <EditFeature />
        </div>
        <div className="relative grid grid-cols-[1fr_auto_1fr] items-center pb-[1px]">
          <div className="pl-[2px]"><PanelHeader title="COMMENTS" /></div>
          <NavBar />
          <p className="pr-[21px] text-right text-[7px] font-bold text-[#333]">1 Face | Area : 1461.515 mm^2</p>
        </div>
      </main>
      <Timeline />
    </div>
  );
}
